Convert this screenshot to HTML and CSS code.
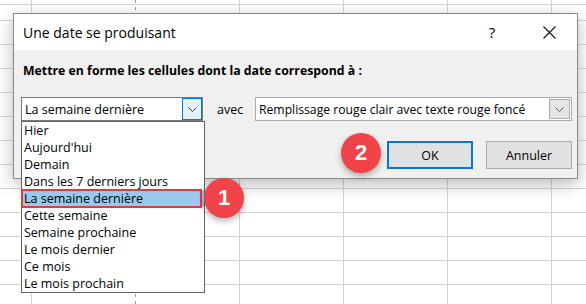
FILE: index.html
```html
<!DOCTYPE html>
<html>
<head>
  <meta charset="UTF-8">
  <meta name="viewport" content="width=device-width">
  <title>Une date se produisant</title>
  <link rel="stylesheet" href="styles.css">
</head>
<body>
  <div class="dialog">
    <div class="dialog-title">
      <span class="title-text">Une date se produisant</span>
      <span class="title-help">?</span>
      <span class="title-close">
        <svg width="13" height="13" viewBox="0 0 13 13"><path d="M0.5 0.5L12.5 12.5M12.5 0.5L0.5 12.5" stroke="#111" stroke-width="1.1" fill="none"/></svg>
      </span>
    </div>

    <div class="dialog-body">
      <p class="rule-label">Mettre en forme les cellules dont la date correspond à :</p>

      <div class="rule-row">
        <div class="combo combo-date">
          <span class="combo-value">La semaine dernière</span>
          <span class="combo-btn active">
            <svg width="9" height="5" viewBox="0 0 9 5"><path d="M0.5 0.5L4.5 4.5L8.5 0.5" stroke="#333" fill="none"/></svg>
          </span>
          <ul class="date-list">
            <li>Hier</li>
            <li>Aujourd'hui</li>
            <li>Demain</li>
            <li>Dans les 7 derniers jours</li>
            <li class="selected">La semaine dernière</li>
            <li>Cette semaine</li>
            <li>Semaine prochaine</li>
            <li>Le mois dernier</li>
            <li>Ce mois</li>
            <li>Le mois prochain</li>
          </ul>
        </div>

        <span class="with-label">avec</span>

        <div class="combo combo-format">
          <span class="combo-value">Remplissage rouge clair avec texte rouge foncé</span>
          <span class="combo-btn">
            <svg width="9" height="5" viewBox="0 0 9 5"><path d="M0.5 0.5L4.5 4.5L8.5 0.5" stroke="#555" fill="none"/></svg>
          </span>
        </div>
      </div>

      <div class="button-row">
        <button class="btn btn-ok">OK</button>
        <button class="btn">Annuler</button>
      </div>
    </div>

    <span class="step-badge step-one">1</span>
    <span class="step-badge step-two">2</span>
  </div>
</body>
</html>
```

FILE: styles.css
```css
html, body {
  margin: 0;
  width: 586px;
  height: 304px;
  overflow: hidden;
}

body {
  font-family: 'Open Sans', 'Noto Sans', sans-serif;
  color: #000;
  background-color: #fff;
  background-image:
    repeating-linear-gradient(to bottom, #9c9c9c 0 3px, transparent 3px 7px),
    repeating-linear-gradient(to bottom, #d4d4d4 0 1px, transparent 1px 24px),
    linear-gradient(#fff, #fff),
    repeating-linear-gradient(to right, #d4d4d4 0 1px, transparent 1px 104px);
  background-size: 1px 100%, 100% 100%, 1px 100%, 100% 100%;
  background-position: 135px 0, 0 20px, 135px 0, 31px 0;
  background-repeat: no-repeat, repeat, no-repeat, repeat;
}

.dialog {
  position: relative;
  box-sizing: border-box;
  width: 565px;
  height: 166px;
  margin: 13px 0 0 13px;
  border: 1px solid #8a8a8a;
  background-color: #f0f0f0;
  box-shadow: 0 5px 16px rgba(0, 0, 0, 0.28);
}

.dialog-title {
  display: flex;
  align-items: center;
  height: 36px;
  background-color: #fff;
}

.title-text {
  flex: 1;
  padding-left: 9px;
  font-size: 14px;
}

.title-help {
  width: 58px;
  text-align: center;
  font-size: 15px;
}

.title-close {
  width: 56px;
  display: flex;
  justify-content: center;
}

.dialog-body {
  padding: 13px 5px 9px 7px;
}

.rule-label {
  margin: 0 0 18px 2px;
  font-size: 12.3px;
  font-weight: bold;
  line-height: 16px;
}

.rule-row {
  display: flex;
  align-items: center;
  height: 24px;
}

.combo {
  position: relative;
  box-sizing: border-box;
  display: flex;
  align-items: center;
  height: 24px;
  background-color: #fff;
  font-size: 12.5px;
}

.combo-date {
  width: 182px;
  border: 1px solid #7a7a7a;
}

.combo-format {
  width: 317px;
  margin-left: auto;
  border: 1px solid #adadad;
  font-size: 12.2px;
}

.combo-value {
  flex: 1;
  padding-left: 3px;
  white-space: nowrap;
}

.combo-btn {
  box-sizing: border-box;
  display: flex;
  align-items: center;
  justify-content: center;
  width: 21px;
  height: 20px;
  margin-right: 1px;
  border: 1px solid #adadad;
  background-color: #e5e5e5;
}

.combo-btn.active {
  width: 20px;
  height: 22px;
  margin-right: 0;
  border-color: #0078d7;
  background-color: #e5f1fb;
}

.with-label {
  margin-left: 14px;
  font-size: 12.5px;
}

.date-list {
  position: absolute;
  top: 23px;
  left: -1px;
  z-index: 2;
  box-sizing: border-box;
  width: 184px;
  margin: 0;
  padding: 0;
  list-style: none;
  border: 1px solid #646464;
  background-color: #fff;
}

.date-list li {
  position: relative;
  height: 17px;
  padding-left: 2px;
  font-size: 12.5px;
  line-height: 18px;
  white-space: nowrap;
}

.date-list li.selected {
  background-color: #99c9ef;
}

.date-list li.selected::after {
  content: "";
  position: absolute;
  top: -1px;
  left: -1px;
  right: 2px;
  bottom: -1px;
  border: 2px solid #e8383e;
}

.button-row {
  display: flex;
  justify-content: flex-end;
  gap: 13px;
  margin-top: 20px;
}

.btn {
  box-sizing: border-box;
  width: 86px;
  height: 28px;
  padding: 0;
  border: 1px solid #adadad;
  background-color: #e1e1e1;
  font-family: inherit;
  font-size: 12.5px;
  color: #000;
}

.btn-ok {
  border: 2px solid #0078d7;
}

.step-badge {
  position: absolute;
  z-index: 3;
  width: 40px;
  height: 40px;
  border-radius: 50%;
  background-color: #f0434a;
  color: #fff;
  font-family: 'Liberation Sans', Arial, sans-serif;
  font-size: 22px;
  font-weight: bold;
  line-height: 40px;
  text-align: center;
  box-shadow: 0 3px 6px rgba(0, 0, 0, 0.3);
}

.step-one {
  left: 190px;
  top: 164px;
}

.step-two {
  left: 327px;
  top: 119px;
}
```
